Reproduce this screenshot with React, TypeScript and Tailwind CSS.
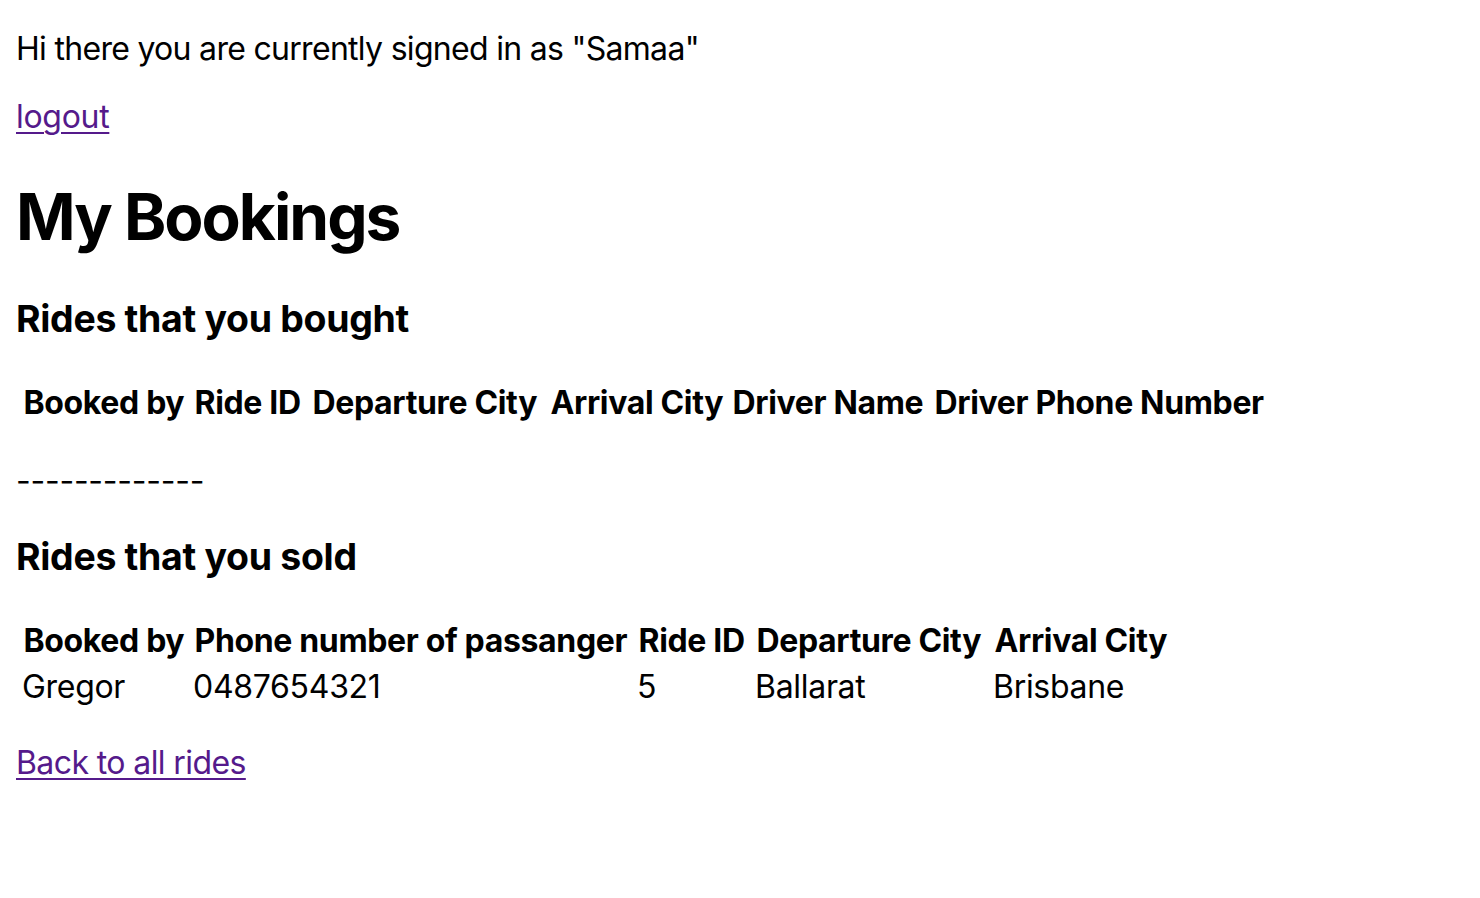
import React from "react";

const boughtCols = ["Booked by", "Ride ID", "Departure City", "Arrival City", "Driver Name", "Driver Phone Number"];
const soldCols = ["Booked by", "Phone number of passanger", "Ride ID", "Departure City", "Arrival City"];
const soldRows = [["Gregor", "0487654321", "5", "Ballarat", "Brisbane"]];

export default function App() {
  return (
    <div className="bg-white min-h-[898px] w-full overflow-hidden">
      <div className="px-[16px] pt-[30px] text-black font-['Inter','Liberation_Sans',sans-serif] text-[32px]">
        <p className="m-0 leading-[38px] tracking-[-0.7px]">Hi there you are currently signed in as "Samaa"</p>
        <p className="mt-[30px] leading-[38px] tracking-[-0.3px]">
          <a href="#" className="text-[#551a8b] underline decoration-[2px] underline-offset-[4px]">logout</a>
        </p>
        <h1 className="mt-[43px] text-[64px] font-bold leading-[76px] tracking-[-2px]">My Bookings</h1>
        <h3 className="mt-[42px] text-[37.44px] font-bold leading-[44px] tracking-[-0.3px]">Rides that you bought</h3>
        <div className="mt-[37px] grid grid-cols-[167px_114px_234px_178px_198px_338px] gap-[4px] p-[4px] w-max">
          {boughtCols.map((c) => (
            <div key={c} className="py-[2px] pl-[3.5px] pr-[1px] leading-[38px] font-bold text-left whitespace-nowrap tracking-[-0.35px]">{c}</div>
          ))}
        </div>
        <p className="mt-[34px] leading-[38px] tracking-[-0.25px]">-------------</p>
        <h3 className="mt-[35px] text-[37.44px] font-bold leading-[44px] tracking-[-0.3px]">Rides that you sold</h3>
        <div className="mt-[37px] grid grid-cols-[167px_440px_114px_234px_178px] gap-[4px] p-[4px] w-max">
          {soldCols.map((c) => (
            <div key={c} className="py-[2px] pl-[3.5px] pr-[1px] leading-[38px] font-bold text-left whitespace-nowrap tracking-[-0.35px]">{c}</div>
          ))}
          {soldRows.map((r) =>
            r.map((v, i) => (
              <div key={i} className="p-[2px] leading-[38px] whitespace-nowrap tracking-[-0.3px]">{v}</div>
            ))
          )}
        </div>
        <p className="mt-[32px] leading-[38px] tracking-[-0.6px]">
          <a href="#" className="text-[#551a8b] underline decoration-[2px] underline-offset-[4px]">Back to all rides</a>
        </p>
      </div>
    </div>
  );
}
